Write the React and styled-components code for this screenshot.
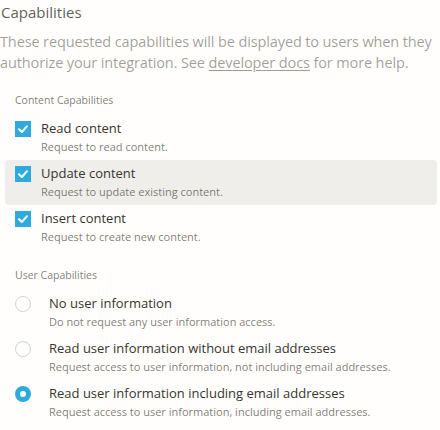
import styled, { createGlobalStyle } from "styled-components";

const GlobalStyle = createGlobalStyle`
  body {
    margin: 0;
    background: #fffefc;
    font-family: "Open Sans", "Noto Sans", sans-serif;
    -webkit-font-smoothing: antialiased;
  }
`;

const colors = {
  blue: "#2eaadc",
  text: "#37352f",
  gray: "rgba(55, 53, 47, 0.65)",
  light: "rgba(55, 53, 47, 0.48)",
  hover: "#efeeeb",
};

const Page = styled.div`
  width: 440px;
  padding-top: 1px;
`;

const Title = styled.h2`
  margin: 0 0 8px;
  font-size: 15px;
  font-weight: 400;
  line-height: 22px;
  color: rgba(55, 53, 47, 0.8);
  padding-left: 1px;
`;

const Description = styled.p`
  margin: 0;
  font-size: 14.5px;
  line-height: 21px;
  color: ${colors.light};
  letter-spacing: -0.12px;
`;

const DocsLink = styled.a`
  color: inherit;
  text-decoration: underline;
  text-underline-offset: 2px;
`;

const Section = styled.section`
  margin-top: ${({ first }) => (first ? "19px" : "17px")};
`;

const SectionLabel = styled.div`
  font-size: 10.5px;
  line-height: 16px;
  color: ${colors.gray};
  padding-left: 15px;
  margin-bottom: 7px;
`;

const Option = styled.div`
  display: flex;
  align-items: flex-start;
  gap: ${({ kind }) => (kind === "radio" ? "18px" : "10px")};
  margin: 0 3px 0 5px;
  padding: 4px 10px 5px;
  height: 45px;
  box-sizing: border-box;
  border-radius: 4px;
  background: ${({ active }) => (active ? colors.hover : "transparent")};
`;

const Box = styled.span`
  flex: none;
  width: 16px;
  height: 16px;
  margin-top: 2px;
  display: flex;
  align-items: center;
  justify-content: center;
  background: ${colors.blue};
`;

const Radio = styled.span`
  flex: none;
  width: 16px;
  height: 16px;
  margin-top: 2px;
  box-sizing: border-box;
  border-radius: 50%;
  border: ${({ checked }) =>
    checked ? `5px solid ${colors.blue}` : "1px solid #d5d4d1"};
  background: #fff;
`;

const OptionText = styled.div`
  display: flex;
  flex-direction: column;
`;

const OptionTitle = styled.div`
  font-size: 13px;
  line-height: 19px;
  color: ${colors.text};
`;

const OptionDesc = styled.div`
  font-size: 11px;
  line-height: 17px;
  color: ${colors.gray};
`;

function CheckMark() {
  return (
    <svg width="12" height="10" viewBox="0 0 12 10">
      <path
        d="M2 5.2 L4.9 8 L10 2.2"
        fill="none"
        stroke="#fff"
        strokeWidth="2"
        strokeLinecap="round"
        strokeLinejoin="round"
      />
    </svg>
  );
}

const contentCaps = [
  { title: "Read content", desc: "Request to read content." },
  {
    title: "Update content",
    desc: "Request to update existing content.",
    active: true,
  },
  { title: "Insert content", desc: "Request to create new content." },
];

const userCaps = [
  {
    title: "No user information",
    desc: "Do not request any user information access.",
  },
  {
    title: "Read user information without email addresses",
    desc: "Request access to user information, not including email addresses.",
  },
  {
    title: "Read user information including email addresses",
    desc: "Request access to user information, including email addresses.",
    checked: true,
  },
];

export default function App() {
  return (
    <Page>
      <GlobalStyle />
      <Title>Capabilities</Title>
      <Description>
        These requested capabilities will be displayed to users when they
        authorize your integration. See{" "}
        <DocsLink href="#">developer docs</DocsLink> for more help.
      </Description>

      <Section first>
        <SectionLabel>Content Capabilities</SectionLabel>
        {contentCaps.map((c) => (
          <Option key={c.title} active={c.active}>
            <Box>
              <CheckMark />
            </Box>
            <OptionText>
              <OptionTitle>{c.title}</OptionTitle>
              <OptionDesc>{c.desc}</OptionDesc>
            </OptionText>
          </Option>
        ))}
      </Section>

      <Section>
        <SectionLabel>User Capabilities</SectionLabel>
        {userCaps.map((c) => (
          <Option key={c.title} kind="radio">
            <Radio checked={c.checked} />
            <OptionText>
              <OptionTitle>{c.title}</OptionTitle>
              <OptionDesc>{c.desc}</OptionDesc>
            </OptionText>
          </Option>
        ))}
      </Section>
    </Page>
  );
}
